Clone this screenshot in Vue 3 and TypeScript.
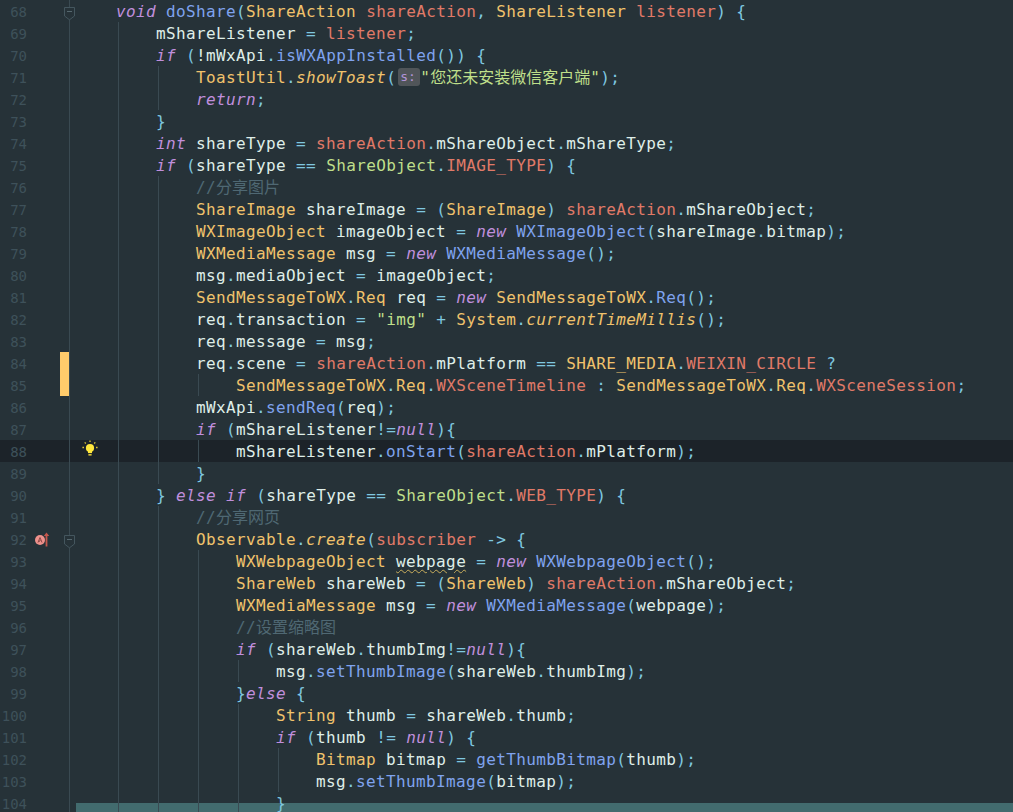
<script setup lang="ts">
interface Tok { c: string; t: string }
interface Row { n: number; toks: Tok[]; guides: number[]; }

const src: string[] = [
  '    «k|void» «m|doShare»(«y|ShareAction» «p|shareAction», «y|ShareListener» «p|listener») {',
  '        mShareListener = «p|listener»;',
  '        «k|if» («w|!»mWxApi.«m|isWXAppInstalled»()) {',
  '            «y|ToastUtil».«yi|showToast»(«h|s:»«s|"您还未安装微信客户端"»);',
  '            «k|return»;',
  '        }',
  '        «k|int» shareType = «p|shareAction».mShareObject.mShareType;',
  '        «k|if» (shareType == «s|ShareObject».«p|IMAGE_TYPE») {',
  '            «c|//分享图片»',
  '            «y|ShareImage» shareImage = («y|ShareImage») «p|shareAction».mShareObject;',
  '            «y|WXImageObject» imageObject = «k|new» «m|WXImageObject»(shareImage.bitmap);',
  '            «y|WXMediaMessage» msg = «k|new» «m|WXMediaMessage»();',
  '            msg.mediaObject = imageObject;',
  '            «y|SendMessageToWX».«y|Req» req = «k|new» «y|SendMessageToWX».«m|Req»();',
  '            req.transaction = «s|"img"» + «y|System».«yi|currentTimeMillis»();',
  '            req.message = msg;',
  '            req.scene = «p|shareAction».mPlatform == «y|SHARE_MEDIA».«p|WEIXIN_CIRCLE» ?',
  '                «y|SendMessageToWX».«y|Req».«p|WXSceneTimeline» : «y|SendMessageToWX».«y|Req».«p|WXSceneSession»;',
  '            mWxApi.«m|sendReq»(req);',
  '            «k|if» (mShareListener!=«k|null»){',
  '                mShareListener.«m|onStart»(«p|shareAction».mPlatform);',
  '            }',
  '        } «k|else» «k|if» (shareType == «s|ShareObject».«p|WEB_TYPE») {',
  '            «c|//分享网页»',
  '            «y|Observable».«yi|create»(«p|subscriber» -> {',
  '                «y|WXWebpageObject» «u|webpage» = «k|new» «m|WXWebpageObject»();',
  '                «y|ShareWeb» shareWeb = («y|ShareWeb») «p|shareAction».mShareObject;',
  '                «y|WXMediaMessage» msg = «k|new» «m|WXMediaMessage»(webpage);',
  '                «c|//设置缩略图»',
  '                «k|if» (shareWeb.thumbImg!=«k|null»){',
  '                    msg.«m|setThumbImage»(shareWeb.thumbImg);',
  '                }«k|else» {',
  '                    «y|String» thumb = shareWeb.thumb;',
  '                    «k|if» (thumb != «k|null») {',
  '                        «y|Bitmap» bitmap = «m|getThumbBitmap»(thumb);',
  '                        msg.«m|setThumbImage»(bitmap);',
  '                    }',
]

function guidesFor(n: number): number[] {
  const g: number[] = []
  if (n >= 69) g.push(4)
  if (n === 71 || n === 72 || (n >= 76 && n <= 89) || n >= 91) g.push(8)
  if (n === 85 || n === 88 || n >= 93) g.push(12)
  if (n === 98 || n >= 100) g.push(16)
  if (n === 102 || n === 103) g.push(20)
  return g
}

function splitCjk(c: string, t: string, out: Tok[]) {
  for (const part of t.split(/([\u4e00-\u9fff]+)/)) {
    if (!part) continue
    out.push({ c: /[\u4e00-\u9fff]/.test(part) ? c + ' cjk' : c, t: part })
  }
}

function parse(line: string): Tok[] {
  const out: Tok[] = []
  for (const part of line.split(/(«[^»]*»)/)) {
    if (!part) continue
    if (part[0] === '«') {
      const i = part.indexOf('|')
      splitCjk(part.slice(1, i), part.slice(i + 1, -1), out)
    } else {
      for (const bit of part.split(/([.(){};=,!?:+\->]+)/)) {
        if (!bit) continue
        out.push({ c: /^[.(){};=,!?:+\->]+$/.test(bit) ? 'o' : 'd', t: bit })
      }
    }
  }
  return out
}

const rows: Row[] = src.map((l, i) => ({ n: 68 + i, toks: parse(l), guides: guidesFor(68 + i) }))
</script>

<template>
  <div class="editor">
    <div v-for="r in rows" :key="r.n" class="line" :class="{ current: r.n === 88, sel: r.n === 104 }">
      <div class="gutter">
        <span class="num">{{ r.n }}</span>
        <span class="anno">
          <svg v-if="r.n === 92" class="override" width="16" height="16" viewBox="0 0 16 16">
            <circle cx="6" cy="9" r="5" fill="#ee918c" />
            <path d="M4 11.5 L6 6.5 L8 11.5 M6.4 9 L4.8 11" fill="none" stroke="#8a4644" stroke-width="1" />
            <path d="M12.5 15.5 V3" stroke="#c4564c" stroke-width="1.8" fill="none" />
            <path d="M9.8 5 L12.5 1.4 L15.2 5 Z" fill="#c4564c" />
          </svg>
        </span>
        <span class="mark" :class="{ changed: r.n === 84 || r.n === 85 }"></span>
        <svg v-if="r.n === 68 || r.n === 92" class="fold" width="12" height="14" viewBox="0 0 12 14">
          <path d="M0.5 0.5 H10.5 V9 L5.5 12.8 L0.5 9 Z" fill="#263238" stroke="#44565e" />
          <path d="M3 4.5 H8" stroke="#56686f" />
        </svg>
      </div>
      <svg v-if="r.n === 88" class="bulb" width="16" height="16" viewBox="0 0 16 16">
        <circle cx="8" cy="8" r="4.1" fill="#ffe83c" />
        <rect x="6" y="10.5" width="4" height="2.6" fill="#ffe83c" />
        <rect x="6.4" y="14" width="3.2" height="1.6" fill="#d8c238" />
        <path d="M8 0.4 V2 M0.4 7.5 H2 M14 7.5 H15.6 M2.7 2.4 L3.8 3.5 M13.3 2.4 L12.2 3.5" stroke="#d8c238" stroke-width="1.3" />
      </svg>
      <div class="code">
        <i v-for="g in r.guides" :key="g" class="guide" :style="{ left: g * 10 + 2 + 'px' }"></i>
        <pre class="text"><span v-for="(t, i) in r.toks" :key="i" :class="t.c">{{ t.t }}</span></pre>
      </div>
    </div>
  </div>
</template>

<style scoped>
.editor {
  width: 1013px;
  height: 812px;
  overflow: hidden;
  background: #263238;
}
.line {
  position: relative;
  display: flex;
  height: 22px;
}
.line.current {
  background: #1c2329;
}
.line.sel::before {
  content: "";
  position: absolute;
  left: 76px;
  right: 0;
  top: 11px;
  height: 11px;
  background: #426b6e;
}
.gutter {
  position: relative;
  flex: 0 0 76px;
  display: flex;
}
.num {
  flex: 0 0 27px;
  text-align: right;
  font: 14px/22px "DejaVu Sans Mono", monospace;
  padding-top: 1px;
  box-sizing: border-box;
  color: #3e515a;
}
.anno {
  flex: 0 0 33px;
  position: relative;
}
.override {
  position: absolute;
  left: 7px;
  top: 3px;
}
.mark {
  flex: 0 0 10px;
  box-sizing: border-box;
  border-right: 1px solid #3a4a52;
}
.mark.changed {
  background: #ffcb6b;
  background-clip: padding-box;
}
.fold {
  position: absolute;
  left: 64px;
  top: 6.5px;
}
.bulb {
  position: absolute;
  left: 82px;
  top: 0;
}
.code {
  position: relative;
  z-index: 1;
  flex: 1;
}
.guide {
  position: absolute;
  top: 0;
  bottom: 0;
  width: 1px;
  background: #3a4a52;
}
.text {
  position: relative;
  margin: 0;
  padding-top: 1px;
  font: 16px/22px "DejaVu Sans Mono", monospace;
  letter-spacing: 0.37px;
  white-space: pre;
}
.d { color: #dfeee8; }
.o { color: #7fc8e0; }
.k { color: #c08fdd; font-style: italic; }
.m { color: #7fa3ee; }
.y { color: #f0c26c; }
.yi { color: #f0c26c; font-style: italic; }
.p { color: #e07a68; }
.s { color: #bfdf8a; }
.c { color: #4f6873; }
.w { color: #dfeee8; }
.u {
  color: #dfeee8;
  text-decoration: underline wavy #c9ae5c 1px;
  text-underline-offset: 2px;
}
.h {
  display: inline-block;
  width: 22px;
  height: 18px;
  margin: 1px 0 0 2px;
  padding-left: 2px;
  box-sizing: border-box;
  border-radius: 3px;
  background: #505559;
  color: #b294d8;
  font: 13px/18px "DejaVu Sans Mono", monospace;
  letter-spacing: 0;
  vertical-align: top;
}
.cjk {
  font-family: "Noto Sans CJK SC", sans-serif;
  font-size: 16px;
  line-height: 0;
  letter-spacing: 0;
  font-style: normal;
}
</style>

<style>
html, body { margin: 0; background: #263238; }
</style>
